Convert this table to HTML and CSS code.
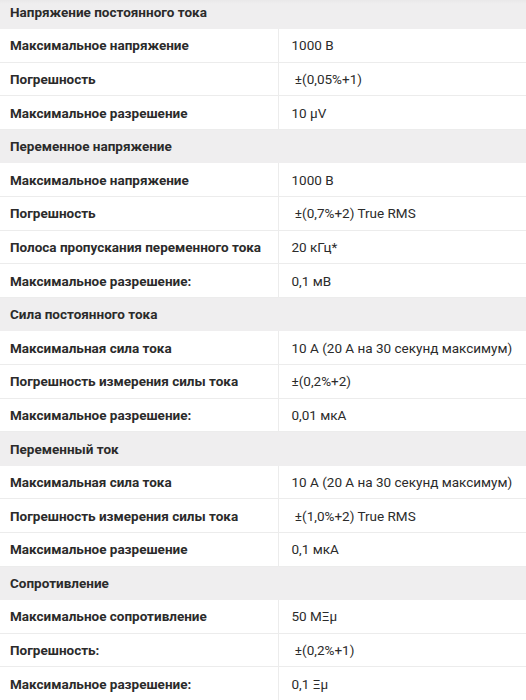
FILE: index.html
```html
<!DOCTYPE html>
<html lang="ru">
<head>
<meta charset="utf-8">
<link rel="stylesheet" href="styles.css">
</head>
<body>
<table class="specs">
  <colgroup><col class="c-name"><col class="c-val"></colgroup>
  <tbody>
    <tr class="group first"><td colspan="2">Напряжение постоянного тока</td></tr>
    <tr><td class="name">Максимальное напряжение</td><td class="val">1000 В</td></tr>
    <tr><td class="name">Погрешность</td><td class="val">&nbsp;±(0,05%+1)</td></tr>
    <tr><td class="name">Максимальное разрешение</td><td class="val">10 μV</td></tr>
    <tr class="group"><td colspan="2">Переменное напряжение</td></tr>
    <tr><td class="name">Максимальное напряжение</td><td class="val">1000 В</td></tr>
    <tr><td class="name">Погрешность</td><td class="val">&nbsp;±(0,7%+2) True RMS</td></tr>
    <tr><td class="name">Полоса пропускания переменного тока</td><td class="val">20 кГц*</td></tr>
    <tr><td class="name">Максимальное разрешение:</td><td class="val">0,1 мВ</td></tr>
    <tr class="group"><td colspan="2">Сила постоянного тока</td></tr>
    <tr><td class="name">Максимальная сила тока</td><td class="val">10 А (20 А на 30 секунд максимум)</td></tr>
    <tr><td class="name">Погрешность измерения силы тока</td><td class="val">±(0,2%+2)</td></tr>
    <tr><td class="name">Максимальное разрешение:</td><td class="val">0,01 мкА</td></tr>
    <tr class="group"><td colspan="2">Переменный ток</td></tr>
    <tr><td class="name">Максимальная сила тока</td><td class="val">10 А (20 А на 30 секунд максимум)</td></tr>
    <tr><td class="name">Погрешность измерения силы тока</td><td class="val">&nbsp;±(1,0%+2) True RMS</td></tr>
    <tr><td class="name">Максимальное разрешение</td><td class="val">0,1 мкА</td></tr>
    <tr class="group"><td colspan="2">Сопротивление</td></tr>
    <tr><td class="name">Максимальное сопротивление</td><td class="val">50 MΞμ</td></tr>
    <tr><td class="name">Погрешность:</td><td class="val">&nbsp;±(0,2%+1)</td></tr>
    <tr><td class="name">Максимальное разрешение:</td><td class="val">0,1 Ξμ</td></tr>
  </tbody>
</table>
</body>
</html>
```
FILE: styles.css
```css
html, body {
  margin: 0;
  padding: 0;
  background: #ffffff;
}
body {
  font-family: Roboto, "Liberation Sans", Arial, sans-serif;
  font-size: 13.5px;
  color: #2b2b2b;
  overflow: hidden;
}
.specs {
  width: 526px;
  margin-top: -5px;
  border-collapse: collapse;
  table-layout: fixed;
  border-right: 1px solid #ececec;
}
.c-name {
  width: 278px;
}
.c-val {
  width: 248px;
}
.specs td {
  height: 33.6px;
  box-sizing: border-box;
  padding: 0 10px;
  border-bottom: 1px solid #ececec;
  vertical-align: middle;
  line-height: 18px;
  white-space: nowrap;
}
.specs td.name {
  font-weight: 700;
  border-right: 1px solid #ececec;
}
.specs td.val {
  padding-left: 13px;
  font-weight: 400;
}
.group td {
  background: #efeeef;
  font-weight: 700;
  border-bottom: 1px solid #efeeef;
}
.group.first td {
  background: linear-gradient(#e2e1e2 0, #efeeef 9px);
}
```
